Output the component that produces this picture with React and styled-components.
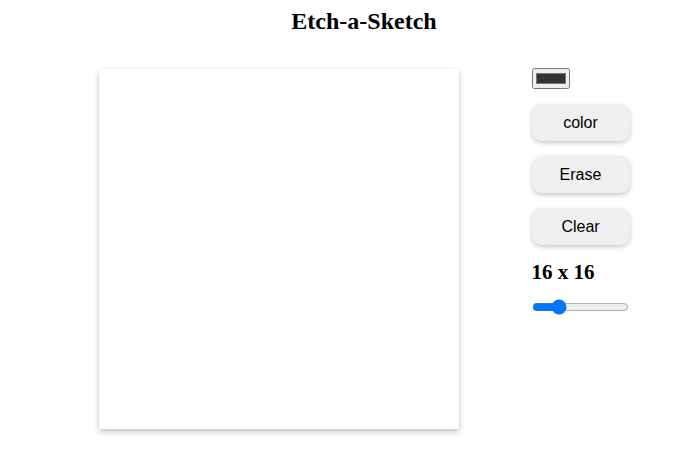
import React, { useState } from "react";
import styled, { createGlobalStyle } from "styled-components";

const Global = createGlobalStyle`
  html, body { margin: 0; padding: 0; background: #ffffff; }
  body { font-family: "Liberation Serif", "Times New Roman", serif; color: #000; }
`;

const Page = styled.div`
  padding: 8px 0 20px 32px;
  display: flex;
  flex-direction: column;
  align-items: center;
`;

const Title = styled.h1`
  margin: 0;
  font-family: "Liberation Serif", serif;
  font-size: 24px;
  font-weight: bold;
  line-height: 27px;
  text-align: center;
`;

const Main = styled.div`
  display: flex;
  align-items: flex-start;
  gap: 73px;
  margin-top: 34px;
`;

const Board = styled.div`
  width: 360px;
  height: 360px;
  flex: none;
  display: grid;
  grid-template-columns: repeat(${(p) => p.$size}, 1fr);
  grid-template-rows: repeat(${(p) => p.$size}, 1fr);
  background: #ffffff;
  box-shadow: 0 3px 6px rgba(0, 0, 0, 0.22), 0 0 3px rgba(0, 0, 0, 0.06);
`;

const Cell = styled.div`
  background: #ffffff;
  min-height: 0;
`;

const Controls = styled.div`
  width: 98px;
  margin-top: -1px;
  display: flex;
  flex-direction: column;
  align-items: stretch;
  gap: 15px;
`;

const ColorInput = styled.input`
  width: 38px;
  height: 21px;
  margin: 0;
  padding: 0 1px;
  box-sizing: border-box;
`;

const Button = styled.button`
  height: 37px;
  border: none;
  border-radius: 10px;
  background: #efefef;
  font-family: "Liberation Sans", Arial, sans-serif;
  font-size: 16px;
  color: #000;
  padding: 0;
  box-shadow: 0 2px 5px rgba(0, 0, 0, 0.22);
  cursor: pointer;
`;

const SizeLabel = styled.div`
  font-family: "Liberation Serif", serif;
  font-size: 21px;
  font-weight: bold;
  line-height: 24px;
`;

const Range = styled.input`
  width: 97px;
  margin: 0;
  height: 16px;
`;

export default function App() {
  const [size, setSize] = useState(16);
  const [color, setColor] = useState("#333333");
  return (
    <>
      <Global />
      <Page>
        <Title>Etch-a-Sketch</Title>
        <Main>
          <Board $size={size}>
            {Array.from({ length: size * size }).map((_, i) => (
              <Cell key={i} />
            ))}
          </Board>
          <Controls>
            <ColorInput
              type="color"
              value={color}
              onChange={(e) => setColor(e.target.value)}
            />
            <Button>color</Button>
            <Button>Erase</Button>
            <Button>Clear</Button>
            <SizeLabel>
              {size} x {size}
            </SizeLabel>
            <Range
              type="range"
              min="1"
              max="64"
              value={size}
              onChange={(e) => setSize(Number(e.target.value))}
            />
          </Controls>
        </Main>
      </Page>
    </>
  );
}
